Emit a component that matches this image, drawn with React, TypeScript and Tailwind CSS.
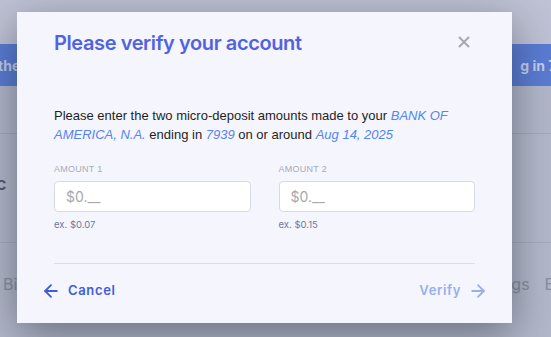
import { ArrowLeft, ArrowRight, X } from "lucide-react";

function BackgroundPage() {
  return (
    <div className="flex flex-col">
      <div className="h-[44px] bg-[#bec2d4]" />
      <div className="flex h-[42px] items-center bg-[#5a7cd2] text-[14px] font-bold text-[#c3cdea]">
        <span className="-ml-[2px]">the</span>
        <span className="ml-[500px] whitespace-nowrap">g in 7939</span>
      </div>
      <div className="h-[48px] border-b border-[#a4a9bb] bg-[#b2b7c9]" />
      <div className="flex h-[109px] items-start border-b border-[#a7acbe] bg-[#b3b8ca] pt-[36px] text-[18px] font-semibold text-[#535a6b]">
        <span className="-ml-[4px]">c</span>
      </div>
      <div className="flex h-[94px] items-start whitespace-nowrap bg-[#b3b8ca] pt-[29px] text-[16px] text-[#878ea2]">
        <span className="ml-[3px] shrink-0">Bi</span>
        <span className="ml-[494px] shrink-0">gs</span>
        <span className="ml-[15px] shrink-0">E</span>
      </div>
    </div>
  );
}

function AmountField({ label, hint }: { label: string; hint: string }) {
  return (
    <div className="flex flex-col">
      <label className="font-['Liberation_Sans',sans-serif] text-[9px] uppercase leading-[12px] tracking-[0.03em] text-[#a9abb6]">
        {label}
      </label>
      <input
        readOnly
        placeholder="$0.__"
        className="mt-[6px] h-[31px] w-full rounded-[4px] border border-[#d7d9e6] bg-white pl-[11px] text-[14px] outline-none placeholder:text-[#a8a8ab]"
      />
      <span className="mt-[7px] text-[9.5px] leading-[12px] text-[#6c7a9e]">{hint}</span>
    </div>
  );
}

export default function App() {
  return (
    <div className="relative h-[337px] w-[551px] overflow-hidden bg-[#b3b8ca] font-['Inter',sans-serif]">
      <BackgroundPage />

      {/* modal */}
      <div className="absolute left-[17px] top-[12px] flex h-[311px] w-[495px] flex-col bg-[#f4f5fd] shadow-[0_12px_40px_rgba(20,24,40,0.45)]">
        <div className="flex flex-col px-[37px] pt-[17px]">
          <div className="flex items-center justify-between">
            <h1 className="text-[20px] font-semibold leading-[28px] tracking-[-0.02em] text-[#5263e0]">
              Please verify your account
            </h1>
            <button className="mr-[2px] -mt-[3px] text-[#a9a9ad]">
              <X size={18} strokeWidth={2.6} />
            </button>
          </div>

          <p className="mt-[49px] font-['Liberation_Sans',sans-serif] text-[13px] leading-[19px] text-[#1d1f27]">
            Please enter the two micro-deposit amounts made to your{" "}
            <em className="text-[#5684f0]">BANK OF AMERICA, N.A.</em> ending in{" "}
            <em className="text-[#5684f0]">7939</em> on or around{" "}
            <em className="text-[#5684f0]">Aug 14, 2025</em>
          </p>

          <div className="mt-[19px] grid grid-cols-2 gap-x-[28px]">
            <AmountField label="Amount 1" hint="ex. $0.07" />
            <AmountField label="Amount 2" hint="ex. $0.15" />
          </div>

          <div className="mt-[32px] h-px bg-[#dcdde5]" />
        </div>

        <div className="mt-[17px] flex items-center justify-between px-[24px]">
          <button className="flex items-center gap-[7px] text-[13px] font-semibold tracking-[0.05em] text-[#3d5ed7]">
            <ArrowLeft size={20} strokeWidth={2.2} />
            Cancel
          </button>
          <button className="flex items-center gap-[7px] text-[13px] font-semibold tracking-[0.05em] text-[#97b0ec]">
            Verify
            <ArrowRight size={20} strokeWidth={2.2} />
          </button>
        </div>
      </div>
    </div>
  );
}
